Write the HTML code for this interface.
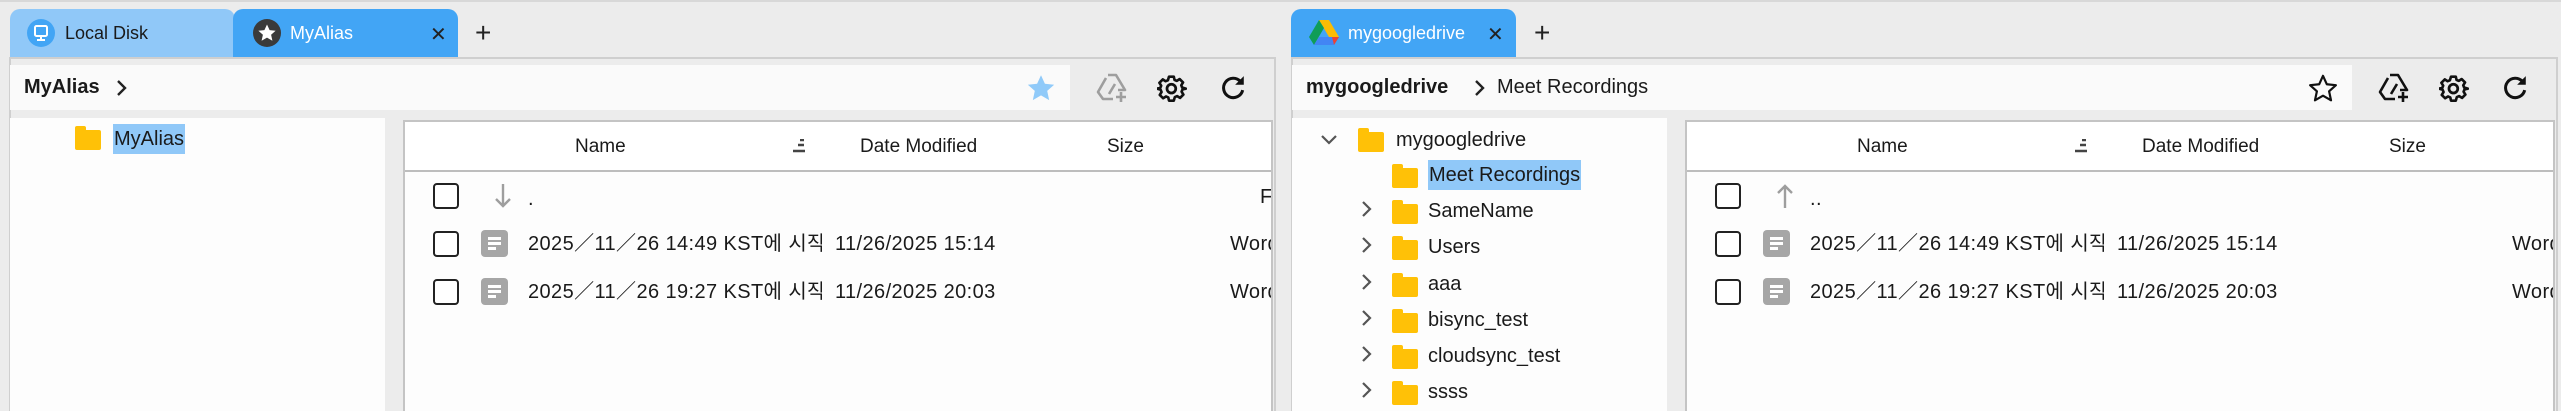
<!DOCTYPE html>
<html><head><meta charset="utf-8"><style>
*{margin:0;padding:0;box-sizing:border-box}
body{width:2561px;height:411px;background:#ececec;position:relative;overflow:hidden;font-family:"Liberation Sans","Noto Sans CJK KR",sans-serif;color:#1a1a1a}
.a{position:absolute;white-space:nowrap}
.pane{position:absolute;top:0;width:1276px;height:411px}
.tab{position:absolute;top:9px;height:48px;border-radius:10px 10px 0 0;font-size:18px;line-height:48px}
.frame{position:absolute;left:9px;top:57px;right:0;bottom:0;border-top:2px solid #cfcfcf;border-left:2px solid #cfcfcf;border-right:2px solid #cfcfcf;background:#ececec}
.addr{position:absolute;left:10px;top:65px;width:1060px;height:45px;background:#fafafa;font-size:20px;line-height:45px}
.tree{position:absolute;left:10px;top:118px;width:375px;bottom:0;background:#fdfdfd}
.files{position:absolute;left:403px;top:120px;width:870px;bottom:0;background:#fdfdfd;border:2px solid #c4c4c4;border-bottom:none;overflow:hidden}
.hdr{position:absolute;left:0;top:0;right:0;height:50px;border-bottom:2px solid #bdbdbd;background:#fff;font-size:19px;line-height:50px}
.cb{position:absolute;left:28px;width:26px;height:26px;border:2px solid #222;border-radius:4px;background:#fff}
.row{font-size:20px;line-height:26px;letter-spacing:0.4px}
.nm{width:294px;overflow:hidden}
.doc{position:absolute;left:76px;width:27px;height:27px;background:#a6a6a6;border-radius:4px}
.doc i{position:absolute;left:7px;height:3px;background:#fff}
.fold{position:absolute;width:26px;height:20px;background:#ffc107;border-radius:2px}
.fold:before{content:"";position:absolute;left:0;top:-4px;width:11px;height:6px;background:#ffc107;border-radius:2px 2px 0 0}
.tt{font-size:20px;line-height:30px}
.hl{background:#90c8f8}
</style></head><body>
<div class="a" style="left:0;top:0;width:2561px;height:2px;background:#d8d8d8"></div>

<!-- LEFT PANE -->
<div class="pane" style="left:0">
 <div class="frame"></div>
 <div class="tab" style="left:10px;width:225px;background:#90c8f8"><svg class="a" style="left:17px;top:10px" width="28" height="28" viewBox="0 0 28 28"><circle cx="14" cy="14" r="14" fill="#42a5f5"/><rect x="8" y="7" width="12" height="10" rx="1.5" fill="none" stroke="#fff" stroke-width="2"/><path d="M14 17v4M10 21h8" stroke="#fff" stroke-width="2"/></svg><span class="a" style="left:55px;top:0">Local Disk</span></div>
 <div class="tab" style="left:233px;width:225px;background:#42a5f5;color:#fff"><svg class="a" style="left:20px;top:10px" width="28" height="28" viewBox="0 0 28 28"><circle cx="14" cy="14" r="14" fill="#3a3a3a"/><path d="M14 5.5l2.6 5.6 6 .6-4.5 4 1.3 6L14 18.6 8.6 21.7l1.3-6-4.5-4 6-.6z" fill="#fff"/></svg><span class="a" style="left:57px;top:0">MyAlias</span><span class="a" style="left:197px;top:2px;color:#222;font-size:20px">✕</span></div>
 <div class="a" style="left:475px;top:17px;font-size:28px;color:#222">+</div>
 <div class="addr"><b class="a" style="left:14px">MyAlias</b><svg class="a" style="left:106px;top:14px" width="12" height="18" viewBox="0 0 12 18"><path d="M2 2l7 7-7 7" fill="none" stroke="#222" stroke-width="2.4"/></svg>
  <svg class="a" style="left:1016px;top:9px" width="30" height="28" viewBox="0 0 24 23"><path d="M12 1l3.2 7 7.6.8-5.7 5.1 1.6 7.6L12 17.6 5.3 21.5l1.6-7.6L1.2 8.8 8.8 8z" fill="#90caf9"/></svg></div>
 <svg class="a" style="left:1095px;top:72px" width="34" height="32" viewBox="0 0 34 32"><path d="M13 3h8l9 15h-7M11 6L3 20l5 7h10M14 22L20 12" fill="none" stroke="#9e9e9e" stroke-width="2.6" stroke-linejoin="round"/><path d="M26 20v10M21 25h10" stroke="#9e9e9e" stroke-width="2.6"/></svg>
 <svg class="a" style="left:1157px;top:72px" width="30" height="32" viewBox="0 0 24 24"><path d="M10 2h4l.6 2.7 1.9.8 2.4-1.5 2.8 2.8-1.5 2.4.8 1.9L24 12v0l-2.7.6-.8 1.9 1.5 2.4-2.8 2.8-2.4-1.5-1.9.8L14 22h-4l-.6-2.7-1.9-.8-2.4 1.5-2.8-2.8 1.5-2.4-.8-1.9L0 12l2.7-.6.8-1.9L2 7.1l2.8-2.8 2.4 1.5 1.9-.8z" transform="translate(0 1) scale(.96)" fill="none" stroke="#111" stroke-width="2.2" stroke-linejoin="round"/><circle cx="11.5" cy="12.5" r="3.5" fill="none" stroke="#111" stroke-width="2.2"/></svg>
 <svg class="a" style="left:1220px;top:74px" width="26" height="28" viewBox="0 0 24 26"><path d="M19 7A9 9 0 1 0 21 15" fill="none" stroke="#111" stroke-width="2.8"/><path d="M22 2v8h-8z" fill="#111"/></svg>
 <div class="tree">
  <div class="fold" style="left:65px;top:12px"></div>
  <span class="a tt hl" style="left:103px;top:6px;padding:0 1px">MyAlias</span>
 </div>
 <div class="files">
  <div class="hdr"><span class="a" style="left:170px">Name</span><svg class="a" style="left:387px;top:17px" width="14" height="14" viewBox="0 0 14 14"><path d="M8 1h4M6 6h6M1 12h12" stroke="#444" stroke-width="2.4"/></svg><span class="a" style="left:455px">Date Modified</span><span class="a" style="left:702px">Size</span></div>
  <div class="cb" style="top:61px"></div><svg class="a" style="left:89px;top:60px" width="18" height="28" viewBox="0 0 18 28"><path d="M9 2v22M2 17l7 7 7-7" fill="none" stroke="#9e9e9e" stroke-width="2.4"/></svg><span class="a row" style="left:123px;top:64px">.</span><span class="a row" style="left:855px;top:62px">F</span>
  <div class="cb" style="top:109px"></div><div class="doc" style="top:108px"><i style="top:7px;width:13px"></i><i style="top:12px;width:13px"></i><i style="top:17px;width:8px"></i></div><span class="a row nm" style="left:123px;top:109px">2025／11／26 14:49 KST에 시작</span><span class="a row" style="left:430px;top:109px">11/26/2025 15:14</span><span class="a row" style="left:825px;top:109px">Word</span>
  <div class="cb" style="top:157px"></div><div class="doc" style="top:156px"><i style="top:7px;width:13px"></i><i style="top:12px;width:13px"></i><i style="top:17px;width:8px"></i></div><span class="a row nm" style="left:123px;top:157px">2025／11／26 19:27 KST에 시작</span><span class="a row" style="left:430px;top:157px">11/26/2025 20:03</span><span class="a row" style="left:825px;top:157px">Word</span>
 </div>
</div>

<!-- RIGHT PANE -->
<div class="pane" style="left:1282px">
 <div class="frame"></div>
 <div class="tab" style="left:9px;width:225px;background:#42a5f5;color:#fff"><svg class="a" style="left:18px;top:10px" width="30" height="27" viewBox="0 0 30 27"><path d="M10 1h10l10 17h-10z" fill="#fbbc04"/><path d="M10 1L0 18l5 8 10-17z" fill="#0f9d58"/><path d="M5 26h20l5-8H10z" fill="#4285f4"/><path d="M25 26l5-8h-7z" fill="#ea4335"/></svg><span class="a" style="left:57px;top:0">mygoogledrive</span><span class="a" style="left:196px;top:2px;color:#222;font-size:20px">✕</span></div>
 <div class="a" style="left:252px;top:17px;font-size:28px;color:#222">+</div>
 <div class="addr"><b class="a" style="left:14px">mygoogledrive</b><svg class="a" style="left:182px;top:14px" width="12" height="18" viewBox="0 0 12 18"><path d="M2 2l7 7-7 7" fill="none" stroke="#222" stroke-width="2.4"/></svg><span class="a" style="left:205px">Meet Recordings</span>
  <svg class="a" style="left:1016px;top:9px" width="30" height="28" viewBox="0 0 24 23"><path d="M12 1.5l3.1 6.9 7.5.8-5.6 5 1.6 7.4L12 17.8 5.4 21.6 7 14.2l-5.6-5 7.5-.8z" fill="none" stroke="#111" stroke-width="1.8" stroke-linejoin="round"/></svg></div>
 <svg class="a" style="left:1095px;top:72px" width="34" height="32" viewBox="0 0 34 32"><path d="M13 3h8l9 15h-7M11 6L3 20l5 7h10M14 22L20 12" fill="none" stroke="#111" stroke-width="2.6" stroke-linejoin="round"/><path d="M26 20v10M21 25h10" stroke="#111" stroke-width="2.6"/></svg>
 <svg class="a" style="left:1157px;top:72px" width="30" height="32" viewBox="0 0 24 24"><path d="M10 2h4l.6 2.7 1.9.8 2.4-1.5 2.8 2.8-1.5 2.4.8 1.9L24 12v0l-2.7.6-.8 1.9 1.5 2.4-2.8 2.8-2.4-1.5-1.9.8L14 22h-4l-.6-2.7-1.9-.8-2.4 1.5-2.8-2.8 1.5-2.4-.8-1.9L0 12l2.7-.6.8-1.9L2 7.1l2.8-2.8 2.4 1.5 1.9-.8z" transform="translate(0 1) scale(.96)" fill="none" stroke="#111" stroke-width="2.2" stroke-linejoin="round"/><circle cx="11.5" cy="12.5" r="3.5" fill="none" stroke="#111" stroke-width="2.2"/></svg>
 <svg class="a" style="left:1220px;top:74px" width="26" height="28" viewBox="0 0 24 26"><path d="M19 7A9 9 0 1 0 21 15" fill="none" stroke="#111" stroke-width="2.8"/><path d="M22 2v8h-8z" fill="#111"/></svg>
 <div class="tree">
  <svg class="a" style="left:28px;top:16px" width="18" height="12" viewBox="0 0 18 12"><path d="M2 2l7 7 7-7" fill="none" stroke="#555" stroke-width="2.2"/></svg>
  <div class="fold" style="left:66px;top:14px"></div><span class="a tt" style="left:104px;top:7px">mygoogledrive</span>
  <div class="fold" style="left:100px;top:50px"></div><span class="a tt hl" style="left:136px;top:42px;padding:0 1px">Meet Recordings</span>
  <svg class="a" style="left:69px;top:82px" width="12" height="18" viewBox="0 0 12 18"><path d="M2 2l7 7-7 7" fill="none" stroke="#555" stroke-width="2.2"/></svg><div class="fold" style="left:100px;top:86px"></div><span class="a tt" style="left:136px;top:78px">SameName</span>
  <svg class="a" style="left:69px;top:118px" width="12" height="18" viewBox="0 0 12 18"><path d="M2 2l7 7-7 7" fill="none" stroke="#555" stroke-width="2.2"/></svg><div class="fold" style="left:100px;top:122px"></div><span class="a tt" style="left:136px;top:114px">Users</span>
  <svg class="a" style="left:69px;top:155px" width="12" height="18" viewBox="0 0 12 18"><path d="M2 2l7 7-7 7" fill="none" stroke="#555" stroke-width="2.2"/></svg><div class="fold" style="left:100px;top:159px"></div><span class="a tt" style="left:136px;top:151px">aaa</span>
  <svg class="a" style="left:69px;top:191px" width="12" height="18" viewBox="0 0 12 18"><path d="M2 2l7 7-7 7" fill="none" stroke="#555" stroke-width="2.2"/></svg><div class="fold" style="left:100px;top:195px"></div><span class="a tt" style="left:136px;top:187px">bisync_test</span>
  <svg class="a" style="left:69px;top:227px" width="12" height="18" viewBox="0 0 12 18"><path d="M2 2l7 7-7 7" fill="none" stroke="#555" stroke-width="2.2"/></svg><div class="fold" style="left:100px;top:231px"></div><span class="a tt" style="left:136px;top:223px">cloudsync_test</span>
  <svg class="a" style="left:69px;top:263px" width="12" height="18" viewBox="0 0 12 18"><path d="M2 2l7 7-7 7" fill="none" stroke="#555" stroke-width="2.2"/></svg><div class="fold" style="left:100px;top:267px"></div><span class="a tt" style="left:136px;top:259px">ssss</span>
 </div>
 <div class="files">
  <div class="hdr"><span class="a" style="left:170px">Name</span><svg class="a" style="left:387px;top:17px" width="14" height="14" viewBox="0 0 14 14"><path d="M8 1h4M6 6h6M1 12h12" stroke="#444" stroke-width="2.4"/></svg><span class="a" style="left:455px">Date Modified</span><span class="a" style="left:702px">Size</span></div>
  <div class="cb" style="top:61px"></div><svg class="a" style="left:89px;top:60px" width="18" height="28" viewBox="0 0 18 28"><path d="M9 26V4M2 11l7-7 7 7" fill="none" stroke="#9e9e9e" stroke-width="2.4"/></svg><span class="a row" style="left:123px;top:64px">..</span>
  <div class="cb" style="top:109px"></div><div class="doc" style="top:108px"><i style="top:7px;width:13px"></i><i style="top:12px;width:13px"></i><i style="top:17px;width:8px"></i></div><span class="a row nm" style="left:123px;top:109px">2025／11／26 14:49 KST에 시작</span><span class="a row" style="left:430px;top:109px">11/26/2025 15:14</span><span class="a row" style="left:825px;top:109px">Word</span>
  <div class="cb" style="top:157px"></div><div class="doc" style="top:156px"><i style="top:7px;width:13px"></i><i style="top:12px;width:13px"></i><i style="top:17px;width:8px"></i></div><span class="a row nm" style="left:123px;top:157px">2025／11／26 19:27 KST에 시작</span><span class="a row" style="left:430px;top:157px">11/26/2025 20:03</span><span class="a row" style="left:825px;top:157px">Word</span>
 </div>
</div>
</body></html>
